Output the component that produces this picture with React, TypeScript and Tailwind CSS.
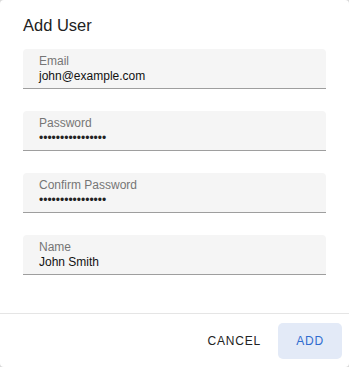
import React from "react";

const fields = [
  { label: "Email", value: "john@example.com", pw: false },
  { label: "Password", value: "••••••••••••••••", pw: true },
  { label: "Confirm Password", value: "••••••••••••••••", pw: true },
  { label: "Name", value: "John Smith", pw: false },
];

export default function App() {
  return (
    <div className="w-[349px] h-[367px] bg-[#d9d9d9]" style={{ fontFamily: "'Liberation Sans', Arial, sans-serif" }}>
      <div className="w-full h-full bg-white rounded-[4px] flex flex-col">
        <div className="pt-[15px] px-[23px] text-[16.5px] leading-[20px] text-[#222]">Add User</div>
        <div className="flex flex-col gap-[22px] px-[23px] pt-[14px]">
          {fields.map((f) => (
            <div key={f.label} className="h-[40px] bg-[#f5f5f5] rounded-t-[4px] border-b border-[#9e9e9e] pl-[16px] pt-[5px]">
              <div className="text-[12px] leading-[14px] text-[#757575]">{f.label}</div>
              <div className={f.pw ? "text-[12px] leading-[17px] text-[#222]" : "text-[12px] leading-[17px] text-[#111]"}>{f.value}</div>
            </div>
          ))}
        </div>
        <div className="mt-auto border-t border-[#e5e5e5] h-[54px] flex items-center justify-end pr-[7px] gap-[17px]">
          <button className="text-[12px] tracking-[0.8px] text-[#222]">CANCEL</button>
          <button className="w-[64px] h-[36px] rounded-[5px] bg-[#e3eaf7] text-[12px] tracking-[0.8px] text-[#2f6ccf]">ADD</button>
        </div>
      </div>
    </div>
  );
}
